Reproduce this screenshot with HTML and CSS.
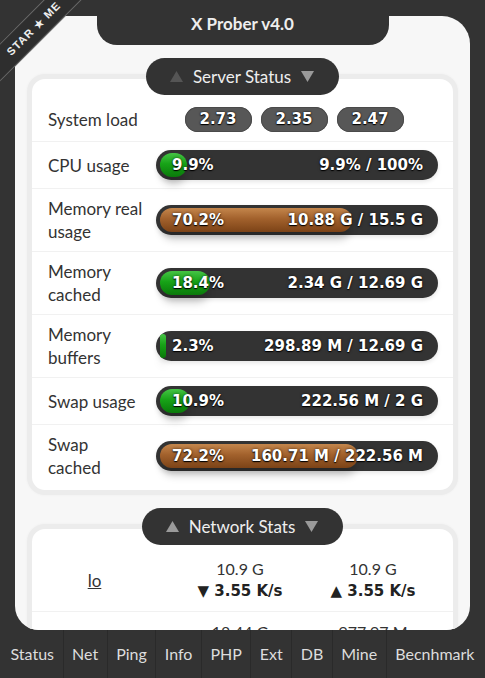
FILE: index.html
```html
<!DOCTYPE html>
<html lang="en">
<head>
<meta charset="utf-8">
<title>X Prober v4.0</title>
<link rel="stylesheet" href="styles.css">
</head>
<body>
<a class="ribbon" href="#">STAR ★ ME</a>
<header class="title">X Prober v4.0</header>
<main class="card">
  <section class="module">
    <div class="legend">
      <svg class="tri tri-dim" width="13" height="11" viewBox="0 0 13 11"><polygon points="6.5,0 13,11 0,11"/></svg>
      <span>Server Status</span>
      <svg class="tri" width="13" height="11" viewBox="0 0 13 11"><polygon points="0,0 13,0 6.5,11"/></svg>
    </div>
    <div class="box">
      <div class="row row-load">
        <div class="label">System load</div>
        <div class="loads"><span class="badge">2.73</span><span class="badge">2.35</span><span class="badge">2.47</span></div>
      </div>
      <div class="row">
        <div class="label">CPU usage</div>
        <div class="bar"><div class="fill green" style="width:9.9%"></div><div class="bar-text"><span>9.9%</span><span>9.9% / 100%</span></div></div>
      </div>
      <div class="row">
        <div class="label">Memory real<br>usage</div>
        <div class="bar"><div class="fill brown" style="width:70.2%"></div><div class="bar-text"><span>70.2%</span><span>10.88 G / 15.5 G</span></div></div>
      </div>
      <div class="row">
        <div class="label">Memory<br>cached</div>
        <div class="bar"><div class="fill green" style="width:18.4%"></div><div class="bar-text"><span>18.4%</span><span>2.34 G / 12.69 G</span></div></div>
      </div>
      <div class="row">
        <div class="label">Memory<br>buffers</div>
        <div class="bar"><div class="fill green" style="width:2.3%"></div><div class="bar-text"><span>2.3%</span><span>298.89 M / 12.69 G</span></div></div>
      </div>
      <div class="row">
        <div class="label">Swap usage</div>
        <div class="bar"><div class="fill green" style="width:10.9%"></div><div class="bar-text"><span>10.9%</span><span>222.56 M / 2 G</span></div></div>
      </div>
      <div class="row">
        <div class="label">Swap<br>cached</div>
        <div class="bar"><div class="fill brown" style="width:72.2%"></div><div class="bar-text"><span>72.2%</span><span>160.71 M / 222.56 M</span></div></div>
      </div>
    </div>
  </section>
  <section class="module module-net">
    <div class="legend">
      <svg class="tri" width="13" height="11" viewBox="0 0 13 11"><polygon points="6.5,0 13,11 0,11"/></svg>
      <span>Network Stats</span>
      <svg class="tri" width="13" height="11" viewBox="0 0 13 11"><polygon points="0,0 13,0 6.5,11"/></svg>
    </div>
    <div class="box">
      <div class="net-row">
        <div class="iface">lo</div>
        <div class="net-col"><div class="total">10.9 G</div><div class="rate">▼ 3.55 K/s</div></div>
        <div class="net-col"><div class="total">10.9 G</div><div class="rate">▲ 3.55 K/s</div></div>
      </div>
      <div class="net-row">
        <div class="iface"></div>
        <div class="net-col"><div class="total">18.44 G</div></div>
        <div class="net-col"><div class="total">977.97 M</div></div>
      </div>
    </div>
  </section>
</main>
<nav class="nav">
  <a href="#">Status</a><a href="#">Net</a><a href="#">Ping</a><a href="#">Info</a><a href="#">PHP</a><a href="#">Ext</a><a href="#">DB</a><a href="#">Mine</a><a href="#">Becnhmark</a>
</nav>
</body>
</html>
```

FILE: styles.css
```css
* { box-sizing: border-box; }
html, body { margin: 0; }
body {
  background: #333;
  font-family: Lato, "Noto Sans", sans-serif;
  color: #333;
  height: 678px;
  overflow: hidden;
}
.ribbon {
  position: absolute;
  left: -38.75px;
  top: 17.75px;
  width: 140px;
  height: 27px;
  padding-left: 8px;
  transform: rotate(-45deg);
  background: #2e2e2e;
  border-top: 1px solid #6a6a6a;
  border-bottom: 1px solid #6a6a6a;
  color: #eee;
  font: 700 11px/25px "Liberation Sans", sans-serif;
  letter-spacing: 1px;
  text-align: center;
  text-decoration: none;
  z-index: 3;
}
.title {
  position: relative;
  z-index: 2;
  width: 292px;
  height: 45px;
  margin: 0 auto -29px;
  background: #333;
  border-radius: 0 0 20px 20px;
  color: #eee;
  font-weight: 700;
  font-size: 17px;
  line-height: 48px;
  text-align: center;
}
.card {
  margin: 0 15px;
  height: 614px;
  background: #f7f7f7;
  border-radius: 28px 28px 24px 24px;
  overflow: hidden;
  padding-top: 42px;
}
.module { margin: 0 12px; }
.module + .module { margin-top: 13px; }
.legend {
  position: relative;
  z-index: 1;
  display: flex;
  align-items: center;
  gap: 10px;
  width: max-content;
  height: 37px;
  margin: 0 auto -21px;
  padding: 0 25px 0 24px;
  border-radius: 19px;
  background: #333;
  color: #eee;
  font-size: 17px;
}
.tri { fill: #9a9a9a; }
.tri-dim { fill: #555; }
.box {
  background: #fff;
  border: 5px solid #ececec;
  border-radius: 18px;
  padding: 18px 0 3px;
  box-shadow: 0 0 3px rgba(0, 0, 0, 0.04);
}
.module-net .box { padding-top: 20px; }
.row {
  display: flex;
  align-items: center;
  padding: 8px 15px 8px 16px;
  border-bottom: 1px solid #f1f1f1;
}
.row:last-child { border-bottom: 0; }
.row-load {
  height: 45px;
  padding-top: 0;
  padding-bottom: 0;
}
.label {
  width: 108px;
  flex: none;
  font-size: 17px;
  line-height: 23px;
}
.loads {
  flex: 1;
  display: flex;
  justify-content: center;
  gap: 9px;
  padding-right: 6px;
}
.badge {
  width: 67px;
  height: 25px;
  border-radius: 13px;
  background: #575757;
  box-shadow: inset 0 0 0 1px #4a4a4a;
  color: #fff;
  font: 700 15px/25px "DejaVu Sans", sans-serif;
  text-align: center;
  text-shadow: 0 1px 1px #000, 0 0 2px #000;
}
.bar {
  flex: 1;
  height: 30px;
  padding: 3px 4px;
  border-radius: 15px;
  background: #333;
  display: grid;
  grid-template-columns: 100%;
  grid-template-rows: 24px;
  box-shadow: 0 2px 4px rgba(0, 0, 0, 0.1);
}
.fill, .bar-text { grid-area: 1 / 1; }
.fill {
  height: 24px;
  border-radius: 12px;
  box-shadow: 0 9px 9px -2px rgba(0, 0, 0, 0.22);
}
.green { background: linear-gradient(#45c445, #17a317 45%, #0a790a); }
.brown { background: linear-gradient(#c4864c, #a2612c 45%, #7c4317); }
.bar-text {
  display: flex;
  justify-content: space-between;
  align-items: center;
  padding: 0 11px 0 12px;
  color: #fff;
  font: 700 15px/24px "DejaVu Sans", sans-serif;
  white-space: nowrap;
  text-shadow: 0 1px 1px #000, 0 0 3px rgba(0, 0, 0, 0.6);
}
.net-row {
  display: grid;
  grid-template-columns: 125px 166px 100px;
  align-items: start;
  padding: 8px 0;
  border-bottom: 1px solid #f1f1f1;
  text-align: center;
  line-height: 23px;
}
.net-row .iface { align-self: center; }
.iface {
  font-size: 17px;
  text-decoration: underline;
}
.total { font-size: 16px; }
.rate {
  font: 700 15px/23px "DejaVu Sans", sans-serif;
  color: #222;
  white-space: nowrap;
}
.nav {
  display: flex;
  justify-content: center;
  height: 48px;
  background: #333;
  white-space: nowrap;
  overflow: hidden;
}
.nav a {
  flex: none;
  padding: 0 8.5px;
  line-height: 48px;
  color: #ddd;
  font-size: 16px;
  text-decoration: none;
  border-left: 1px solid #2a2a2a;
}
.nav a:first-child { border-left: 0; }
```
